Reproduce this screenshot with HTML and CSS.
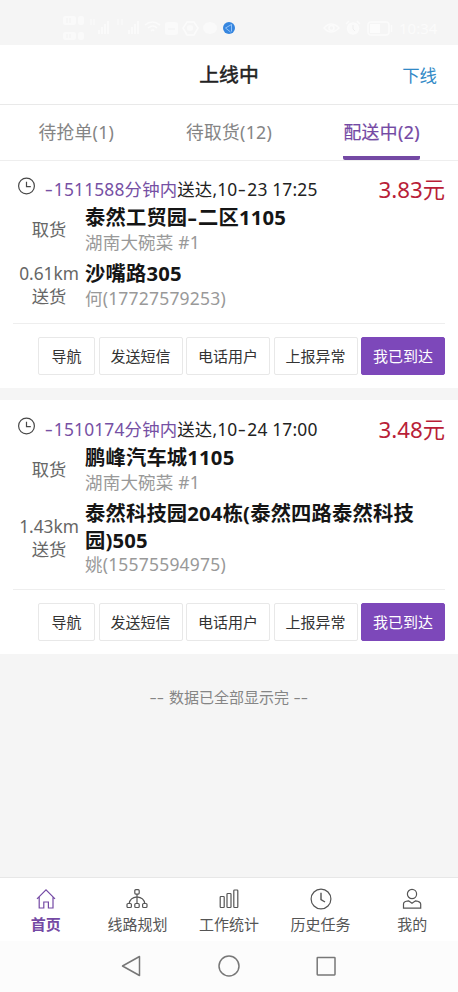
FILE: index.html
```html
<!DOCTYPE html>
<html lang="zh-CN">
<head>
<meta charset="utf-8">
<meta name="viewport" content="width=device-width, initial-scale=1">
<title>上线中</title>
<link rel="stylesheet" href="styles.css">
</head>
<body>
<div class="status">
  <svg class="status-left" width="180" height="30" viewBox="60 13 180 30" fill="none" stroke="#fbfbfb" stroke-width="1.6">
    <g fill="#fafafa" stroke="none">
      <rect x="63" y="16" width="13" height="9" rx="2"/><rect x="78" y="16" width="6" height="9" rx="2"/>
      <rect x="63" y="32" width="13" height="8" rx="2"/><rect x="78" y="32" width="6" height="8" rx="2"/>
      <rect x="98" y="30" width="2" height="4"/><rect x="101" y="27" width="2" height="7"/><rect x="104" y="24" width="2" height="10"/><rect x="107" y="21" width="2" height="13"/>
      <rect x="128" y="30" width="2" height="4"/><rect x="131" y="27" width="2" height="7"/><rect x="134" y="24" width="2" height="10"/><rect x="137" y="21" width="2" height="13"/>
      <rect x="165" y="22" width="13" height="13" rx="3"/><circle cx="190" cy="28" r="3"/><ellipse cx="210" cy="28" rx="7" ry="6"/>
    </g>
    <path stroke-width="1" d="M91 19v6M94 19v6M118 19v6M122 19v6"/>
    <path d="M145 25q7-6 15 0M148 28q5-4 9 0M151 31q2-2 3 0"/>
    <path d="M187 22h7l4 6-4 7h-7l-4-7z"/>
    <path stroke="#f2f2f2" stroke-width="1" d="M168 29h7M67 18v5M70 18v5M67 34v4M70 34v4"/>
    <circle cx="229" cy="28" r="6" fill="#3686df" stroke="none"/>
    <path stroke="#a9d2ff" stroke-width=".8" d="M231.500 24.500l-6 3.500 5 4M231.500 24.500v7"/>
  </svg>
  <svg class="status-right" width="74" height="18" viewBox="322 19 74 18" fill="none" stroke="#fbfbfb" stroke-width="1.5">
    <path d="M324 28q7-8 15 0q-8 8-15 0z"/><circle cx="331.500" cy="28" r="2.500"/>
    <circle cx="353" cy="28.500" r="5.500" fill="#fafafa"/><path d="M346 24l3-3M360 24l-3-3"/><path stroke="#eeeeee" stroke-width="1" d="M353 25v4l2 2"/>
    <rect x="368" y="22" width="21" height="13" rx="3"/><rect x="370" y="24" width="10" height="9" fill="#fcfcfc" stroke="none"/><path d="M391.500 25v7"/>
  </svg>
  <span class="clock">10:34</span>
</div>
<header class="header"><h1>上线中</h1><a class="offline">下线</a></header>
<nav class="tabs">
  <div class="tab"><span>待抢单(1)</span></div>
  <div class="tab"><span>待取货(12)</span></div>
  <div class="tab active"><span>配送中(2)</span></div>
</nav>
<main class="list">
  <article class="card">
    <div class="top">
      <svg class="time-icon" width="18" height="18" viewBox="0 0 18 18" fill="none" stroke="#484848" stroke-width="1.200"><circle cx="8.500" cy="9" r="7.900"/><path d="M8.500 4.800v4.800h4.300"/></svg>
      <p class="due"><span class="late"><i class="dash">-</i>1511588分钟内</span>送达,10<i class="dash">-</i>23 17:25</p>
      <strong class="price">3.83元</strong>
    </div>
    <div class="stop">
      <div class="kind">取货</div>
      <div class="place"><h2>泰然工贸园<i class="dash">-</i>二区1105</h2><p>湖南大碗菜 #1</p></div>
    </div>
    <div class="stop">
      <div class="kind">0.61km<br>送货</div>
      <div class="place"><h2>沙嘴路305</h2><p>何(17727579253)</p></div>
    </div>
    <div class="actions">
      <button class="short">导航</button><button>发送短信</button><button>电话用户</button><button>上报异常</button><button class="primary">我已到达</button>
    </div>
  </article>
  <article class="card">
    <div class="top">
      <svg class="time-icon" width="18" height="18" viewBox="0 0 18 18" fill="none" stroke="#484848" stroke-width="1.200"><circle cx="8.500" cy="9" r="7.900"/><path d="M8.500 4.800v4.800h4.300"/></svg>
      <p class="due"><span class="late"><i class="dash">-</i>1510174分钟内</span>送达,10<i class="dash">-</i>24 17:00</p>
      <strong class="price">3.48元</strong>
    </div>
    <div class="stop">
      <div class="kind">取货</div>
      <div class="place"><h2>鹏峰汽车城1105</h2><p>湖南大碗菜 #1</p></div>
    </div>
    <div class="stop">
      <div class="kind">1.43km<br>送货</div>
      <div class="place"><h2>泰然科技园204栋(泰然四路泰然科技<br>园)505</h2><p>姚(15575594975)</p></div>
    </div>
    <div class="actions">
      <button class="short">导航</button><button>发送短信</button><button>电话用户</button><button>上报异常</button><button class="primary">我已到达</button>
    </div>
  </article>
  <p class="end"><i class="rule">--</i> 数据已全部显示完 <i class="rule">--</i></p>
</main>
<nav class="bottom">
  <a class="item current">
    <svg width="22" height="22" viewBox="0 0 22 22"><path d="M2 10.800L11 1.800l9 9M4.200 9v11h4.600v-6h4.600v6H18V9"/></svg>
    <span>首页</span>
  </a>
  <a class="item">
    <svg width="22" height="22" viewBox="0 0 22 22"><rect x="8.800" y="1.700" width="4.400" height="4.400" rx="1"/><rect x="1" y="15.500" width="4.400" height="4" rx="1"/><rect x="8.800" y="15.500" width="4.400" height="4" rx="1"/><rect x="16.600" y="15.500" width="4.400" height="4" rx="1"/><path d="M11 6.100v9.400M3.200 15.500Q4 9.500 11 8.800Q18 9.500 18.800 15.500"/></svg>
    <span>线路规划</span>
  </a>
  <a class="item">
    <svg width="22" height="22" viewBox="0 0 22 22"><rect x="2.200" y="8.500" width="4" height="11" rx=".7"/><rect x="9" y="5.500" width="4" height="14" rx=".7"/><rect x="15.800" y="2" width="4" height="17.500" rx=".7"/></svg>
    <span>工作统计</span>
  </a>
  <a class="item">
    <svg width="22" height="22" viewBox="0 0 22 22"><circle cx="11" cy="11" r="9.900"/><path d="M11 4.800v6.700l4 2.500" stroke-width="1.400"/></svg>
    <span>历史任务</span>
  </a>
  <a class="item">
    <svg width="22" height="22" viewBox="0 0 22 22"><circle cx="11" cy="6" r="4.600"/><path d="M7.500 12.800L11 15.300l3.500-2.500q5 .5 5.200 3.200v4.200H2.500V16q0-2.800 5-3.200z"/></svg>
    <span>我的</span>
  </a>
</nav>
<div class="system">
  <svg width="24" height="24" viewBox="0 0 24 24"><path d="M19.500 2.500v19L2.500 12z"/></svg>
  <svg width="24" height="24" viewBox="0 0 24 24"><circle cx="12" cy="12" r="10"/></svg>
  <svg width="24" height="24" viewBox="0 0 24 24"><rect x="3.200" y="3.500" width="17.800" height="17.400" rx=".6"/></svg>
</div>
</body>
</html>
```
FILE: styles.css
```css
* { box-sizing: border-box; }
body {
  margin: 0;
  height: 992px;
  display: flex;
  flex-direction: column;
  overflow: hidden;
  background: #f5f5f5;
  color: #222;
  font-family: "Noto Sans", "Noto Sans CJK SC", sans-serif;
}
h1, h2, p { margin: 0; }
svg { display: block; flex: none; }
.status {
  height: 45px;
  flex: none;
  display: flex;
  align-items: flex-start;
  padding: 13px 20px 0 60px;
}
.status-right { margin: 6px 0 0 82px; }
.clock { margin: 5px 0 0 3px; font-size: 15px; line-height: 20px; color: #fbfbfb; }
.header {
  height: 60px;
  flex: none;
  display: grid;
  grid-template-columns: 1fr auto 1fr;
  align-items: center;
  padding: 0 21px;
  background: #fff;
  border-bottom: 1px solid #e9e9e9;
}
.header h1 { grid-column: 2; font-size: 19.8px; font-weight: 400; line-height: 28px; -webkit-text-stroke: .5px #222; }
.offline { justify-self: end; font-size: 17.4px; color: #3189c6; }
.tabs { height: 56px; flex: none; display: flex; background: #fff; border-bottom: 1px solid #eee; }
.tab { flex: 1; display: flex; justify-content: center; color: #858585; font-size: 17.8px; line-height: 54px; letter-spacing: .25px; }
.tab span { height: 55px; }
.active { color: #7449a4; letter-spacing: .4px; }
.active span { border-bottom: 4px solid #7449a4; border-radius: 2px; -webkit-text-stroke: .2px #7449a4; }
.list { flex: 1; }
.card { background: #fff; padding: 14px 13px 13px; margin-bottom: 12px; }
.card + .card { padding-top: 15px; }
.top { height: 29px; display: flex; padding-left: 5px; }
.time-icon { margin-top: 2px; }
.due { margin-left: 8px; font-size: 17.4px; line-height: 28px; white-space: nowrap; letter-spacing: .17px; }
.late { color: #7650a4; }
.price { margin-left: auto; font-size: 22.3px; font-weight: 400; line-height: 29px; color: #b91e38; }
.dash { display: inline-block; font-style: normal; transform: scaleX(1.45); margin: 0 2px; }
.stop { display: flex; margin-bottom: 6px; }
.kind { width: 72px; flex: none; align-self: center; text-align: center; font-size: 17.3px; line-height: 23px; color: #666; }
.place h2 { font-size: 20.3px; line-height: 26.5px; font-weight: 700; color: #151515; white-space: nowrap; letter-spacing: .18px; }
.place p { font-size: 17.5px; line-height: 23.5px; color: #999; letter-spacing: .2px; }
.actions { display: flex; justify-content: flex-end; gap: 3.5px; margin-top: 13px; padding-top: 13px; border-top: 1px solid #eee; }
.card + .card .actions { margin-top: 12px; }
button {
  width: 84px;
  height: 38px;
  padding: 0;
  border: 1px solid #e8e8e8;
  border-radius: 2px;
  background: #fff;
  color: #333;
  font: 15px/36px "Noto Sans", "Noto Sans CJK SC", sans-serif;
}
button.short { width: 57px; }
button.primary { background: #7d48ba; border-color: #7d48ba; color: #fff; }
.end { margin-top: 31px; text-align: center; font-size: 15px; line-height: 24px; color: #858585; }
.rule { display: inline-block; font-style: normal; transform: scaleX(1.5); margin: 0 3px; }
.bottom { height: 64px; flex: none; display: flex; background: #fff; border-top: 1px solid #e7e7e7; }
.item { flex: 1; display: flex; flex-direction: column; align-items: center; padding-top: 10px; font-size: 15px; color: #555; }
.item svg { fill: none; stroke: currentColor; stroke-width: 1.2; }
.item span { line-height: 22px; margin-top: 3px; }
.current { color: #7449a4; font-weight: 700; }
.system { height: 51px; flex: none; display: flex; justify-content: center; gap: 73px; padding-top: 13px; background: #fcfcfc; }
.system svg { fill: none; stroke: #777; stroke-width: 1.5; stroke-linejoin: round; }
```
